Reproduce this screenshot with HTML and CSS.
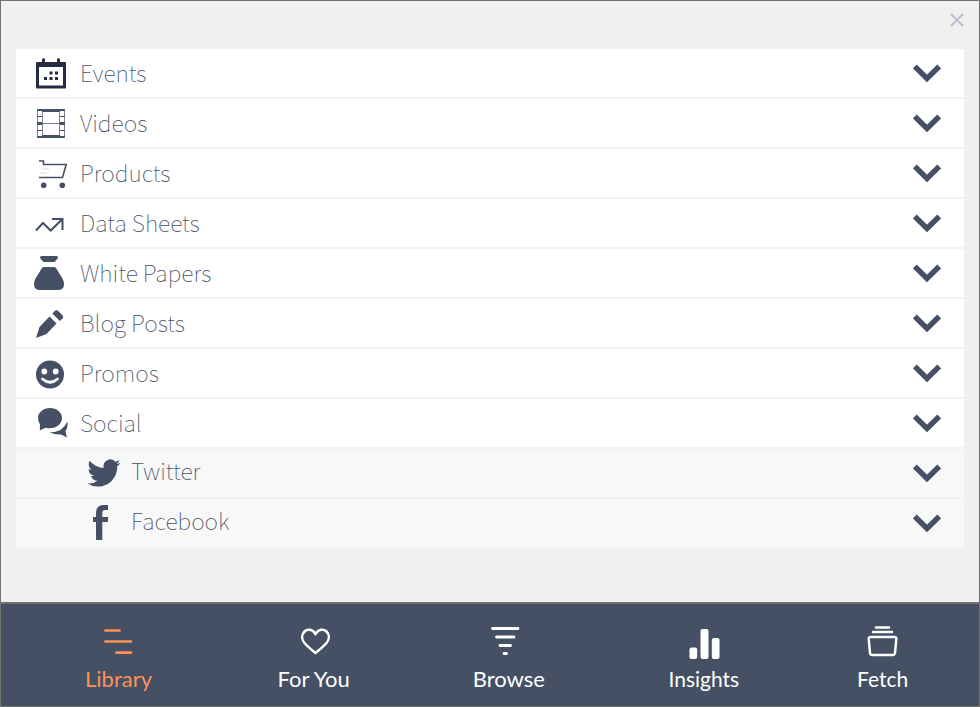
FILE: index.html
```
<!DOCTYPE html>
<html lang="en">
<head>
	<meta charset="utf-8">
	<meta name="viewport" content="width=device-width, initial-scale=1">
	<title>Library</title>
	<link rel="stylesheet" href="styles.css">
</head>
<body>
<!-- shared arrow, used by every row -->
<svg class="defs" aria-hidden="true">
	<symbol id="arrow" viewBox="0 0 28 18">
		<path d="M1.800 2.500L14 14.500l12.200-12" fill="none" stroke="currentColor" stroke-width="5.400"/>
	</symbol>
</svg>
<header class="top">
	<button class="close" aria-label="Close">
		<svg viewBox="0 0 14 14"><path d="M1 1l12 12M13 1L1 13" fill="none" stroke="currentColor" stroke-width="2"/></svg>
	</button>
</header>
<main class="content">
	<ul class="list">
		<li>
			<button class="row">
				<svg class="icon dark" viewBox="0 0 36 36">
					<path fill-rule="evenodd" d="M5 7h5V4q1.500-1.500 3 0v3h12V4q1.500-1.500 3 0v3h5q1 0 1 1v24.500q0 1-1 1H5q-1 0-1-1V8q0-1 1-1zM7 12v18.500h24V12z"/>
					<path d="M17.500 16.500h3v3h-3zM23 16.500h3v3h-3zM12 22h3v3h-3zM17.500 22h3v3h-3zM23 22h3v3h-3z"/>
				</svg>
				<span class="name">Events</span>
				<svg class="arrow"><use href="#arrow"/></svg>
			</button>
		</li>
		<li>
			<button class="row">
				<svg class="icon" viewBox="0 0 36 36">
					<path d="M5 5q0-1 1-1h26q1 0 1 1v1H5zM5 31h28v1q0 1-1 1H6q-1 0-1-1zM10 5h18v2H10zM10 30h18v2H10z"/>
					<path d="M5 17h5v3H5zM28 17h5v3h-5zM5 11h5v1H5zM28 11h5v1h-5zM5 25h5v1H5zM28 25h5v1h-5z"/>
					<path d="M5.500 5v27M32.500 5v27M10.500 5v27M27.500 5v27M10 18.500h18" fill="none" stroke="currentColor" stroke-width="1" opacity=".7"/>
				</svg>
				<span class="name">Videos</span>
				<svg class="arrow"><use href="#arrow"/></svg>
			</button>
		</li>
		<li>
			<button class="row">
				<svg class="icon" viewBox="0 0 36 36">
					<path d="M7 6h4.500v3.500h22.700l-3.700 13H7" fill="none" stroke="currentColor" stroke-width="1.600"/>
					<path d="M10 14h7M8 18h7" fill="none" stroke="#e6e6e8" stroke-width="1.500"/>
					<circle cx="11.700" cy="30.300" r="2.800"/>
					<circle cx="30.300" cy="30.300" r="2.800"/>
				</svg>
				<span class="name">Products</span>
				<svg class="arrow"><use href="#arrow"/></svg>
			</button>
		</li>
		<li>
			<button class="row">
				<svg class="icon" viewBox="0 0 36 36">
					<path d="M4 25.500l7-7.500 7.700 7.500L30 14.500M20 14h10.500v11" fill="none" stroke="currentColor" stroke-width="2"/>
				</svg>
				<span class="name">Data Sheets</span>
				<svg class="arrow"><use href="#arrow"/></svg>
			</button>
		</li>
		<li>
			<button class="row">
				<svg class="icon" viewBox="0 0 36 36">
					<path d="M9.500 1h15q1.500 0 1.500 2l-3 3.500q-.5.500-1.500.500h-9q-1 0-1.500-.5L8 3q0-2 1.500-2z"/>
					<path d="M12 12h10q1.500 0 2 1l6.500 10.500Q32 26 32 29q0 6-6 6H8q-6 0-6-6 0-3 1.500-5.500L10 13q.5-1 2-1z"/>
				</svg>
				<span class="name">White Papers</span>
				<svg class="arrow"><use href="#arrow"/></svg>
			</button>
		</li>
		<li>
			<button class="row">
				<svg class="icon" viewBox="0 0 36 36">
					<path d="M17.500 11.500l7 7L14.500 29 4 33l3.500-11z"/>
					<path d="M20.300 8.500l2.700-2.700q1.500-1 3 0l4.700 4.700q1 1.500 0 2.800l-2.900 2.700z"/>
				</svg>
				<span class="name">Blog Posts</span>
				<svg class="arrow"><use href="#arrow"/></svg>
			</button>
		</li>
		<li>
			<button class="row">
				<svg class="icon" viewBox="0 0 36 36">
					<circle cx="18" cy="19.500" r="14"/>
					<circle cx="12.300" cy="16.500" r="2.900" fill="#fff"/>
					<circle cx="23.700" cy="16.500" r="2.900" fill="#fff"/>
					<path d="M10.500 24q7.500 6.500 15 0" fill="none" stroke="#fff" stroke-width="2.700" stroke-linecap="round"/>
				</svg>
				<span class="name">Promos</span>
				<svg class="arrow"><use href="#arrow"/></svg>
			</button>
		</li>
		<li>
			<button class="row">
				<svg class="icon" viewBox="0 0 36 36">
					<path d="M18 3c6.800 0 12 4.500 12 10s-5.200 10.300-12 10.300q-2 0-4-.5-2.500.7-6.200 2.800l.2-6Q6 16.500 6 13C6 7.500 11.200 3 18 3z"/>
					<path d="M35.200 16.500q1.300 5.500-1.700 9.500l1.400 6.500-5.900-3q-6 .5-11.500-2.300Q31 27.500 35.200 16.500z"/>
				</svg>
				<span class="name">Social</span>
				<svg class="arrow"><use href="#arrow"/></svg>
			</button>
			<ul class="sub">
				<li>
					<button class="row">
						<svg class="icon" viewBox="-1 -1 26 26">
							<path d="M23.950 4.570a10 10 0 0 1-2.820.770 4.960 4.960 0 0 0 2.160-2.720c-.950.550-2 .950-3.130 1.180a4.920 4.920 0 0 0-8.380 4.480C7.690 8.090 4.070 6.130 1.640 3.160a4.820 4.820 0 0 0-.67 2.480c0 1.710.87 3.210 2.190 4.100a4.900 4.900 0 0 1-2.230-.620v.06a4.920 4.920 0 0 0 3.950 4.830 5 5 0 0 1-2.210.080 4.940 4.940 0 0 0 4.600 3.420A9.870 9.870 0 0 1 0 19.540a13.990 13.990 0 0 0 7.550 2.210c9.050 0 14-7.500 14-13.990 0-.210 0-.420-.02-.630a9.940 9.940 0 0 0 2.420-2.560z"/>
						</svg>
						<span class="name">Twitter</span>
						<svg class="arrow"><use href="#arrow"/></svg>
					</button>
				</li>
				<li>
					<button class="row">
						<svg class="icon" viewBox="0 0 36 36">
							<path d="M10 35V17H7v-5h3V8q0-8 8-8h4v5h-3q-2.700 0-2.700 3v4h6l-.6 5h-5.400v18z"/>
						</svg>
						<span class="name">Facebook</span>
						<svg class="arrow"><use href="#arrow"/></svg>
					</button>
				</li>
			</ul>
		</li>
	</ul>
</main>
<nav class="tabs">
	<a class="tab active" href="#library">
		<svg class="tab-icon" viewBox="0 0 36 36">
			<path d="M4.500 6.500h14M4.500 17.500h25.500M15.500 28.700h14.500" fill="none" stroke="currentColor" stroke-width="2.700" stroke-linecap="round"/>
		</svg>
		Library
	</a>
	<a class="tab" href="#foryou">
		<svg class="tab-icon" viewBox="0 0 36 36">
			<path d="M19.500 10.300C17 5 11.500 4.500 8.500 7.500s-3.300 7.500 0 11.500q3.500 4 11 10 7.500-6 11-10c3.300-4 3-8.500 0-11.500s-8.500-2.500-11 2.800z" fill="none" stroke="currentColor" stroke-width="2.500" stroke-linejoin="round"/>
		</svg>
		For You
	</a>
	<a class="tab" href="#browse">
		<svg class="tab-icon" viewBox="0 0 36 36">
			<path d="M1.500 4.500H27M5.500 13H23M9 21.500h10.500M13 29.500h2.500" fill="none" stroke="currentColor" stroke-width="2.800" stroke-linecap="round"/>
		</svg>
		Browse
	</a>
	<a class="tab small" href="#insights">
		<svg class="tab-icon" viewBox="0 0 36 36">
			<rect x="3.500" y="23.500" width="7.700" height="11.500" rx="2"/>
			<rect x="14.500" y="5" width="8" height="30" rx="2"/>
			<rect x="25.800" y="14" width="7.700" height="21" rx="2"/>
		</svg>
		Insights
	</a>
	<a class="tab small" href="#fetch">
		<svg class="tab-icon" viewBox="0 0 36 36">
			<path d="M11 3.500h13M8 8h19M5.500 13h24q2 0 1.800 2L30 29q-.2 2-2.200 2H7.200q-2 0-2.200-2L3.700 15q-.2-2 1.800-2z" fill="none" stroke="currentColor" stroke-width="2.500" stroke-linecap="round"/>
		</svg>
		Fetch
	</a>
</nav>
</body>
</html>
```
FILE: styles.css
```
*{
	box-sizing: border-box;
}
body{
	margin: 0;
	min-height: 100vh;
	display: flex;
	flex-direction: column;
	border: 1px solid #727272;
	background-color: #f0f0f0;
	color: #455064;
}
ul{
	margin: 0;
	padding: 0;
	list-style: none;
}
button{
	margin: 0;
	padding: 0;
	border: 0;
	background: none;
	color: inherit;
	font: inherit;
	cursor: pointer;
}
svg{
	display: block;
	flex: none;
	fill: currentColor;
}
.defs{
	position: absolute;
	width: 0;
	height: 0;
}
.top{
	display: flex;
	justify-content: flex-end;
	padding: 12px 15px 0;
	height: 48px;
}
.close{
	width: 14px;
	height: 14px;
	color: #c0bfd0;
}
.content{
	flex: 1;
	padding: 0 15px 24px;
}
.row{
	display: flex;
	align-items: center;
	width: 100%;
	height: 50px;
	padding: 0 23px 0 16px;
	border-bottom: 2px solid #f2f2f2;
	background-color: #fff;
	font-family: "Noto Sans CJK SC", "Open Sans", sans-serif;
	font-size: 23px;
	font-weight: 100;
	line-height: 32px;
	text-align: left;
}
.icon{
	width: 36px;
	height: 36px;
}
.dark{
	color: #272b42;
}
.name{
	flex: 1;
	padding-left: 12px;
	padding-bottom: 2px;
}
.arrow{
	width: 28px;
	height: 18px;
}
.sub .row{
	padding-left: 70px;
	background-color: #f8f8f8;
}
.sub .name{
	padding-left: 9px;
	padding-bottom: 7px;
}
.tabs{
	display: grid;
	grid-template-columns: repeat(4, 6fr) 5fr;
	padding: 20px 15px 12px 20px;
	border-top: 2px solid #727272;
	background-color: #455064;
}
.tab{
	display: flex;
	flex-direction: column;
	align-items: center;
	gap: 4px;
	color: #fff;
	font-family: Lato, sans-serif;
	font-size: 22px;
	line-height: 30px;
	text-decoration: none;
}
.small{
	font-size: 21px;
}
.tab-icon{
	width: 36px;
	height: 36px;
}
.active{
	color: #fd9155;
}
```
